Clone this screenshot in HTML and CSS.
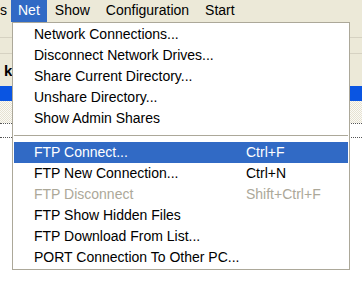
FILE: index.html
```html
<!DOCTYPE html>
<html lang="en">
<head>
  <meta charset="UTF-8" />
  <title>Net menu</title>
  <link rel="stylesheet" href="styles.css">
</head>
<body>
  <!-- menu bar -->
  <div class="menubar">
    <span class="menubar-item cut">s</span>
    <span class="menubar-item active">Net</span>
    <span class="menubar-item">Show</span>
    <span class="menubar-item">Configuration</span>
    <span class="menubar-item">Start</span>
  </div>

  <!-- window content behind the open menu -->
  <div class="workspace">
    <div class="toolbar-row"></div>
    <div class="toolbar-row"></div>
    <div class="toolbar-row tall"><b class="drive">k</b></div>
    <div class="panel-title"></div>
    <div class="panel-pattern"></div>
    <div class="dotted"></div>
    <div class="dotted"></div>

    <!-- dropdown -->
    <div class="dropdown">
      <div class="menu-item">Network Connections...</div>
      <div class="menu-item">Disconnect Network Drives...</div>
      <div class="menu-item">Share Current Directory...</div>
      <div class="menu-item">Unshare Directory...</div>
      <div class="menu-item">Show Admin Shares</div>
      <div class="separator"></div>
      <div class="menu-item selected"><span class="label">FTP Connect...</span><span class="shortcut">Ctrl+F</span></div>
      <div class="menu-item"><span class="label">FTP New Connection...</span><span class="shortcut">Ctrl+N</span></div>
      <div class="menu-item disabled"><span class="label">FTP Disconnect</span><span class="shortcut">Shift+Ctrl+F</span></div>
      <div class="menu-item">FTP Show Hidden Files</div>
      <div class="menu-item">FTP Download From List...</div>
      <div class="menu-item">PORT Connection To Other PC...</div>
    </div>
  </div>
</body>
</html>
```

FILE: styles.css
```css
body {
  margin: 0;
  padding: 0;
  min-height: 100vh;
  background: #ffffff;
  font-family: "Liberation Sans", Arial, sans-serif;
  font-size: 14px;
  color: #000000;
}
/* menu bar */
.menubar {
  display: flex;
  height: 22px;
  background: #ece9d8;
  line-height: 21px;
}
.menubar-item {
  padding: 0 8px;
}
.menubar-item.cut {
  padding: 0 4px 0 0;
}
.menubar-item.active {
  padding: 0 7px;
  background: #316ac5;
  color: #ffffff;
}
/* content behind the menu */
.workspace {
  position: relative;
  min-height: 261px;
}
.toolbar-row {
  height: 15px;
  background: #ece9d8;
  border-bottom: 1px solid #d6d2c2;
}
.toolbar-row.tall {
  height: 32px;
  border-bottom: none;
  line-height: 34px;
}
.drive {
  padding-left: 4px;
  font-size: 15px;
}
.panel-title {
  height: 15px;
  background: #0a55e2;
}
.panel-pattern {
  height: 22px;
  background-color: #f4f2ea;
  background-image: repeating-conic-gradient(#e6e2d2 0 25%, #fbfaf6 0 50%);
  background-size: 2px 2px;
}
.dotted {
  height: 13px;
  border-top: 1px dotted #555555;
}
/* dropdown */
.dropdown {
  position: absolute;
  top: 0;
  left: 12px;
  width: 334px;
  padding: 1px;
  background: #ffffff;
  border: 1px solid #aca899;
}
.menu-item {
  display: flex;
  height: 21px;
  line-height: 21px;
  padding-left: 20px;
}
.menu-item .label {
  flex: 1;
}
.menu-item .shortcut {
  width: 102px;
}
.menu-item.selected {
  background: #316ac5;
  color: #ffffff;
}
.menu-item.disabled {
  color: #aca899;
}
.separator {
  height: 6px;
  margin-bottom: 6px;
  border-bottom: 1px solid #aca899;
}
```
